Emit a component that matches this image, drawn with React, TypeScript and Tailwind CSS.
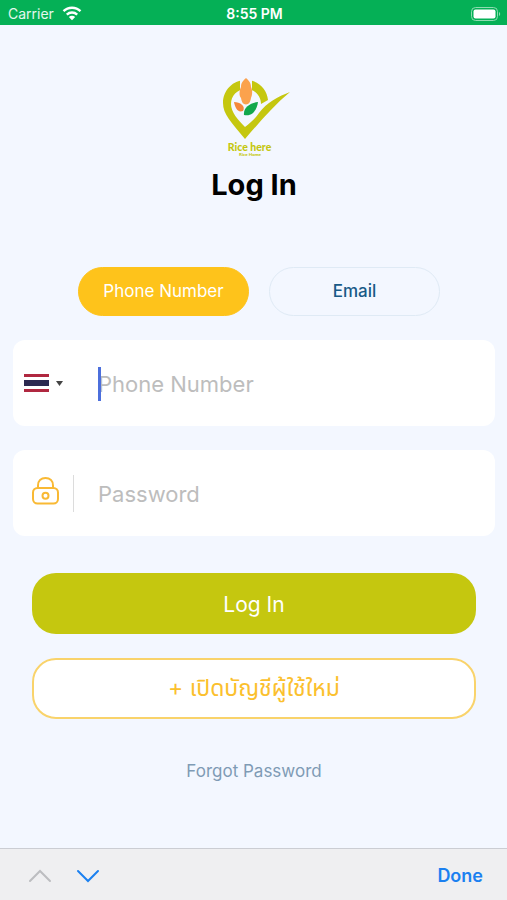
import React, { useState } from 'react';

function Logo() {
  return (
    <svg viewBox="-1 0 100 100" className="w-25 h-25" role="img" aria-label="Rice here">
      <path
        fill="#c5c70f"
        d="M41 15C28 15 18 25 18 38C18 49 26 57 40 74C54 58 68 41 85 27C74 31 61 38 54 48C50 54 45 58 40 62C33 55 26 47 26 39C26 31 32 24 41 24C49 24 56 30 56 39L63 35C62 24 53 15 41 15Z"
      />
      <path fill="#f3f7ff" d="M35 14h12v11h-12z" />
      <path fill="#fba24d" d="M41 13C43 15 46 17 46 22C48 26 47 31 46 33C45 38 44 39 41 39.5C38 39 37 38 36 33C34 31 34 26 36 22C36 17 39 15 41 13Z" />
      <path fill="#f5883c" d="M29 37C35 37 41 41 38 46C32 48 30 42 29 37Z" />
      <path fill="#12a84c" d="M53 37C52 44 48 52 39 50C38 43 45 38 53 37Z" />
      <text x="44.5" y="86" textAnchor="middle" fontSize="10.5" fontWeight="900" fill="#c5c70f" fontFamily="Lato, sans-serif">
        Rice here
      </text>
      <text x="45" y="91" textAnchor="middle" fontSize="4.5" fontWeight="900" fill="#c5c70f" fontFamily="Lato, sans-serif">
        Rice Home
      </text>
    </svg>
  );
}

function StatusBar() {
  return (
    <div className="h-[25px] bg-[#05b056] text-white text-sm grid grid-cols-3 items-center pl-2 pr-1.5 pt-0.5 shrink-0">
      <div className="flex items-center gap-2 text-white/90">
        Carrier
        <svg viewBox="0 0 20 15" className="w-5 h-[15px]" fill="none" stroke="white" strokeWidth="2.4">
          <path d="M1.5 5.2C6.2 0.6 13.8 0.6 18.5 5.2" />
          <path d="M4.8 8.6C7.8 5.8 12.2 5.8 15.2 8.6" />
          <path d="M10 14.2L6.8 11C8.6 9.4 11.4 9.4 13.2 11Z" fill="white" stroke="none" />
        </svg>
      </div>
      <div className="text-center font-semibold">8:55 PM</div>
      <svg viewBox="0 0 30 14" className="w-[30px] h-3.5 justify-self-end">
        <rect x="0.5" y="0.5" width="26" height="13" rx="4" fill="none" stroke="#8edbb0" />
        <rect x="2.5" y="2.5" width="22" height="9" rx="2" fill="white" />
        <path d="M28 5C29.6 5.6 29.6 8.4 28 9Z" fill="#8edbb0" />
      </svg>
    </div>
  );
}

export default function App() {
  const [tab, setTab] = useState('phone');
  const [login, setLogin] = useState('');
  const [password, setPassword] = useState('');

  const handleLogin = (e: React.FormEvent) => {
    e.preventDefault();
  };

  const tabOn = 'bg-[#fec31b] border-[#fec31b] text-white';
  const tabOff = 'border-[#dfeaf5] text-[#185a87] font-medium';

  return (
    <div className="min-h-screen bg-[#f3f7ff] flex flex-col font-['Inter','Noto_Sans_Thai',sans-serif]">
      <StatusBar />

      <main className="flex-1 flex flex-col pl-[13px] pr-3 pt-10">
        <div className="flex flex-col items-center">
          <Logo />
          <h1 className="text-[29px] leading-10 font-bold text-black">Log In</h1>
        </div>

        <div className="flex justify-center gap-5 mt-[62px] pl-[65px] pr-[55px]">
          <button
            type="button"
            onClick={() => setTab('phone')}
            className={`flex-1 h-[49px] rounded-full border text-[17px] ${tab === 'phone' ? tabOn : tabOff}`}
          >
            Phone Number
          </button>
          <button
            type="button"
            onClick={() => setTab('email')}
            className={`flex-1 h-[49px] rounded-full border text-[17px] ${tab === 'email' ? tabOn : tabOff}`}
          >
            Email
          </button>
        </div>

        <form onSubmit={handleLogin} className="mt-6">
          <div className="h-[86px] bg-white rounded-xl flex items-center">
            <button type="button" aria-label="Country code" className="w-[85px] pl-[11px] flex items-center gap-[7px]">
              <svg viewBox="0 0 25 18" className="w-[25px] h-[18px]">
                <path fill="#b02840" d="M0 0h25v18H0z" />
                <path fill="#fff" d="M0 3h25v12H0z" />
                <path fill="#2b2950" d="M0 6h25v6H0z" />
              </svg>
              <svg viewBox="0 0 7 5" className="w-[7px] h-[5px]">
                <path fill="#444" d="M0 0h7L3.5 5z" />
              </svg>
            </button>
            <div className="relative flex-1">
              <input
                aria-label="Phone Number"
                type="tel"
                placeholder="Phone Number"
                value={login}
                onChange={(e) => setLogin(e.target.value)}
                className="w-full h-10 pt-0.5 text-[22px] placeholder:text-[#bdbdbd] outline-none"
              />
              {login === '' && <span className="absolute left-0 top-1 w-[3px] h-[34px] bg-[#4c6fdc]" />}
            </div>
          </div>

          <div className="h-[86px] bg-white rounded-xl flex items-center mt-6">
            <div className="w-[85px] pl-[19px] flex items-center gap-3.5">
              <svg viewBox="0 0 27 32" className="w-[27px] h-8" fill="none" stroke="#f9b934" strokeWidth="2">
                <path d="M6 11V8.5C6 4 9 1 13.5 1S21 4 21 8.5V11" />
                <rect x="1" y="11" width="25" height="15.5" rx="4.5" />
                <circle cx="13.5" cy="18.8" r="3" />
              </svg>
              <span className="w-px h-[37px] bg-[#dcdcdc]" />
            </div>
            <input
              aria-label="Password"
              type="password"
              placeholder="Password"
              value={password}
              onChange={(e) => setPassword(e.target.value)}
              className="flex-1 h-10 pt-0.5 text-[22px] placeholder:text-[#bdbdbd] outline-none"
            />
          </div>

          <div className="flex flex-col gap-6 mt-[37px] px-[19px]">
            <button type="submit" className="h-[61px] pt-0.5 rounded-3xl bg-[#c5c70f] text-white text-[21px]">
              Log In
            </button>
            <button type="button" className="h-[61px] rounded-3xl bg-white border-2 border-[#f9d36b] text-[#fbc02d] text-[23px]">
              + เปิดบัญชีผู้ใช้ใหม่
            </button>
          </div>
        </form>

        <a href="#forgot" className="self-center mt-10 text-[17px] text-[#7f9bb5]">
          Forgot Password
        </a>
      </main>

      <div className="h-[52px] shrink-0 bg-[#efeff1] border-t border-[#cbcdd3] flex items-center gap-6 px-6 pt-0.5">
        <button type="button" aria-label="Previous field" className="text-[#bcbdc0]">
          <svg viewBox="0 0 24 14" className="w-6 h-3.5 ml-1" fill="none" stroke="currentColor" strokeWidth="2" strokeLinecap="round">
            <path d="M2 12L12 2L22 12" />
          </svg>
        </button>
        <button type="button" aria-label="Next field" className="text-[#1b80f0]">
          <svg viewBox="0 0 24 14" className="w-6 h-3.5" fill="none" stroke="currentColor" strokeWidth="2" strokeLinecap="round">
            <path d="M2 2L12 12L22 2" />
          </svg>
        </button>
        <button type="button" className="ml-auto text-lg font-semibold text-[#1b80f0]">
          Done
        </button>
      </div>
    </div>
  );
}
